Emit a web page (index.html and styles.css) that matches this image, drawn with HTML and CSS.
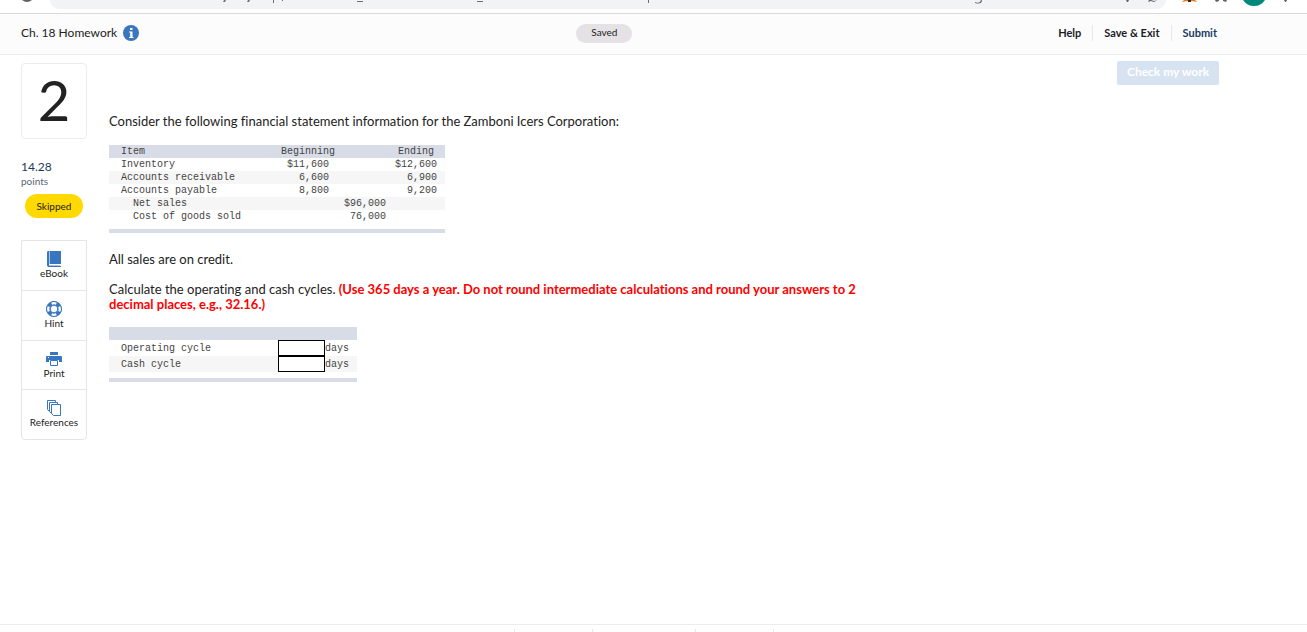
FILE: index.html
```
<!DOCTYPE html>
<html lang="en">
<head>
<meta charset="utf-8">
<title>Ch. 18 Homework</title>
<link rel="stylesheet" href="styles.css">
</head>
<body>
<div class="toolbar" aria-hidden="true">
  <svg class="toolbar-reload" viewBox="0 0 12 3"><path d="M1 0Q6 4 11 0Z" fill="#5f6368"/></svg>
  <div class="omnibox">
    <svg class="omnibox-url" viewBox="0 0 935 4"><g fill="#6b6f74"><path d="M174 0h2l-1 2h-2zM198 0h2l-1 2h-2zM223 0h1v3h-1zM232 0h1v1h-1zM307 1h6v1h-6zM427 1h6v1h-6zM598 0h1v3h-1z"/><path d="M925 2q5 2 6-2h1q0 5-7 3z"/></g></svg>
    <svg class="omnibox-icons" viewBox="0 0 40 4"><path d="M11 0h3l-1 2h-1zM33 2l1-2h2l3 1 3-1-3 2-3-1z" fill="#5f6368"/></svg>
  </div>
  <svg class="toolbar-icons" viewBox="0 0 120 8"><path d="M0 2l2-2h11l2 2-5-1-3 1-2-1z" fill="#e8761b"/><path d="M6 0h3v2H6z" fill="#35251c"/><path d="M33 0h4v1l-3 1zM41 0h4l-1 2-3-1z" fill="#5f6368"/><path d="M61 0h22q-4 6-11 6T61 0z" fill="#00897b"/><path d="M102 0h3l-1 2h-1z" fill="#5f6368"/></svg>
</div>

<header class="header">
  <div class="title-group">
    <h1 class="title">Ch. 18 Homework</h1>
    <button class="info" aria-label="Assignment information">
      <svg viewBox="0 0 16 16"><circle cx="8" cy="8" r="8" fill="#3a76bd"/><path d="M7 3h2.500v2H7zM6 6.500h3.500V12h1v1H6v-1h1.200V7.500H6z" fill="#fff"/></svg>
    </button>
  </div>
  <span class="saved">Saved</span>
  <nav class="actions">
    <a class="action" href="#">Help</a>
    <a class="action" href="#">Save &amp; Exit</a>
    <a class="action action-submit" href="#">Submit</a>
  </nav>
</header>

<main class="main">
  <aside class="sidebar">
    <div class="number">2</div>
    <div class="score">14.28</div>
    <div class="points">points</div>
    <span class="skipped">Skipped</span>
    <div class="tools">
      <button class="tool">
        <svg viewBox="0 0 16 16"><path d="M2 0h13v13H3v2h12v1H2.500Q1 16 1 14V1.500Q1 0 2 0z" fill="#3a76bd"/><path d="M3.500 0v13M3 14.500h11" stroke="#a9c5e4" fill="none"/></svg>
        eBook
      </button>
      <button class="tool">
        <svg viewBox="0 0 16 16"><circle cx="8" cy="8" r="5.500" fill="#fff" stroke="#3a76bd" stroke-width="4.500"/><g stroke="#fff" fill="none" stroke-width="2.500"><path d="M5.600 2.600a6 6 0 0 1 4.800 0M5.600 13.400a6 6 0 0 0 4.800 0M2.600 5.600a6 6 0 0 0 0 4.800M13.400 5.600a6 6 0 0 1 0 4.800"/></g><circle cx="8" cy="8" r="7.500" fill="none" stroke="#3a76bd"/><circle cx="8" cy="8" r="3.800" fill="#fff" stroke="#3a76bd"/></svg>
        Hint
      </button>
      <button class="tool">
        <svg viewBox="0 0 16 16"><path d="M4 1h8v3H4zM1 5h14q1 0 1 1v5h-3V9H3v2H0V6q0-1 1-1z" fill="#3a76bd"/><path d="M4.500 9.500h7v5h-7z" fill="#fff" stroke="#3a76bd"/><path d="M2 6.500h1" stroke="#fff"/></svg>
        Print
      </button>
      <button class="tool">
        <svg viewBox="0 0 16 16"><g fill="#fff" stroke="#3a76bd"><path d="M1.500.500h8v11h-6l-2-2z"/><path d="M3.500 2.500h8v11h-6l-2-2z"/><path d="M5.500 4.500h9v11h-7l-2-2z"/></g></svg>
        References
      </button>
    </div>
  </aside>

  <section class="question">
    <p class="text">Consider the following financial statement information for the Zamboni Icers Corporation:</p>
    <table class="sheet statement">
      <thead>
        <tr><th class="item">Item</th><th class="beginning">Beginning</th><th class="middle"></th><th class="ending">Ending</th></tr>
      </thead>
      <tbody>
        <tr><td>Inventory</td><td class="amount">$11,600</td><td></td><td class="amount">$12,600</td></tr>
        <tr><td>Accounts receivable</td><td class="amount">6,600</td><td></td><td class="amount">6,900</td></tr>
        <tr><td>Accounts payable</td><td class="amount">8,800</td><td></td><td class="amount">9,200</td></tr>
        <tr><td class="indent">Net sales</td><td></td><td class="amount">$96,000</td><td></td></tr>
        <tr><td class="indent">Cost of goods sold</td><td></td><td class="amount">76,000</td><td></td></tr>
      </tbody>
    </table>
    <p class="text">All sales are on credit.</p>
    <p class="text">Calculate the operating and cash cycles. <strong class="note">(Use 365 days a year. Do not round intermediate calculations and round your answers to 2 decimal places, e.g., 32.16.)</strong></p>
    <table class="sheet answers">
      <thead><tr><th class="label"></th><th class="field"></th><th></th></tr></thead>
      <tbody>
        <tr><td><label for="operating">Operating cycle</label></td><td><input id="operating" class="entry" type="text"></td><td>days</td></tr>
        <tr><td><label for="cash">Cash cycle</label></td><td><input id="cash" class="entry" type="text"></td><td>days</td></tr>
      </tbody>
    </table>
  </section>

  <button class="check" disabled>Check my work</button>
</main>

<footer class="footer"><div class="slot"></div><div class="slot"></div></footer>
</body>
</html>
```
FILE: styles.css
```
* { box-sizing: border-box; }
body {
  margin: 0;
  min-height: 100vh;
  display: flex;
  flex-direction: column;
  background: #fff;
  color: #222;
  font-family: Lato, "Open Sans", sans-serif;
  font-size: 13px;
  font-variant-ligatures: none;
}
button { font: inherit; color: inherit; border: 0; padding: 0; background: none; }
svg { display: block; }

.toolbar {
  display: flex;
  align-items: flex-start;
  height: 14px;
  padding: 0 5px 0 21px;
  border-bottom: 1px solid #d9dadc;
}
.toolbar-reload { width: 12px; height: 3px; }
.omnibox {
  flex: 1;
  display: flex;
  justify-content: space-between;
  height: 9px;
  margin: 0 16px 0 17px;
  padding-right: 6px;
  background: #f1f3f4;
  border-radius: 0 0 14px 14px;
}
.omnibox-url { width: 935px; height: 4px; }
.omnibox-icons { width: 50px; height: 4px; }
.toolbar-icons { width: 120px; height: 8px; }

.header {
  display: grid;
  grid-template-columns: 19fr auto 20fr;
  align-items: center;
  height: 41px;
  padding: 0 90px 2px 21px;
  background: #fcfcfc;
  border-bottom: 1px solid #ececee;
}
.title-group { display: flex; align-items: center; gap: 6px; }
.title { margin: 0; font-size: 12px; font-weight: 400; line-height: 16px; }
.info svg { width: 16px; height: 16px; }
.saved {
  width: 56px;
  height: 19px;
  border-radius: 10px;
  background: #e4e2e4;
  font-size: 10px;
  line-height: 17px;
  text-align: center;
}
.actions { display: flex; justify-content: flex-end; }
.action {
  padding: 0 11px;
  border-left: 1px solid #e8e8ea;
  color: #1c1c28;
  font-size: 11px;
  font-weight: 700;
  line-height: 16px;
  text-decoration: none;
}
.action:first-child { border-left: 0; }
.action:last-child { padding-right: 0; }
.action-submit { color: #1b3a63; }

.main {
  flex: 1;
  display: flex;
  align-items: flex-start;
  padding: 0 88px 0 21px;
}
.sidebar {
  flex: none;
  width: 66px;
  margin: 8px 22px 0 0;
  display: flex;
  flex-direction: column;
}
.number {
  height: 76px;
  border: 1px solid #ececec;
  border-radius: 4px;
  font-size: 56px;
  line-height: 72px;
  text-align: center;
}
.score { margin-top: 20px; color: #1b3a63; font-size: 12px; line-height: 16px; }
.points { color: #5a6678; font-size: 10px; line-height: 12px; }
.skipped {
  align-self: center;
  width: 58px;
  margin-top: 7px;
  border-radius: 12px;
  background: #ffd900;
  font-size: 10px;
  line-height: 24px;
  text-align: center;
}
.tools {
  margin-top: 22px;
  border: 1px solid #e6e6e6;
  border-radius: 0 0 4px 4px;
}
.tool {
  display: flex;
  flex-direction: column;
  align-items: center;
  width: 100%;
  height: 50px;
  padding-top: 10px;
  border-top: 1px solid #e6e6e6;
  font-size: 10px;
  line-height: 12px;
}
.tool:first-child { border-top: 0; }
.tool:first-child, .tool:nth-child(3) { height: 49px; }
.tool svg { width: 16px; height: 16px; }

.question { flex: 0 1 756px; padding-top: 59px; }
.text { margin: 0 0 15px; line-height: 15px; }
.note { color: #f00; }
.sheet {
  border-collapse: separate;
  border-spacing: 0;
  table-layout: fixed;
  color: #444;
  font-family: "Liberation Mono", monospace;
  font-size: 10px;
  line-height: 13px;
  border-bottom: 4px solid #d8dce7;
}
.sheet::after { content: ""; display: table-row; height: 6px; }
.sheet th, .sheet td { height: 13px; padding: 0; font-weight: 400; text-align: left; white-space: nowrap; }
.sheet thead { background: #d8dce7; }
.sheet tbody tr:nth-child(even) { background: #f6f6f6; }
.sheet td:first-child, .sheet th:first-child { padding-left: 12px; }
.statement { width: 336px; margin: 16px 0 19px; }
.item { width: 172px; }
.beginning { width: 48px; }
.middle { width: 57px; }
.statement .ending { padding-left: 12px; }
.statement .indent:first-child { padding-left: 24px; }
.sheet .amount { text-align: right; }
.statement .amount:last-child { padding-right: 8px; }
.answers { width: 248px; }
.answers .label { width: 169px; }
.answers .field { width: 47px; }
.answers tbody td { height: 16px; }
.entry {
  display: block;
  width: 47px;
  height: 16px;
  padding: 0 2px;
  border: 1px solid #000;
  border-radius: 0;
  background: #fff;
  font: inherit;
}

.check {
  flex: none;
  width: 102px;
  height: 24px;
  margin: 6px 0 0 auto;
  padding-bottom: 3px;
  border-radius: 2px;
  background: #d7e3f1;
  color: #fff;
  font-size: 12px;
  font-weight: 700;
}

.footer {
  display: flex;
  justify-content: center;
  gap: 102px;
  height: 8px;
  padding: 4px 20px 0 0;
  border-top: 1px solid #ededed;
}
.slot { width: 79px; border: solid #e8e8e8; border-width: 0 1px; }
```
